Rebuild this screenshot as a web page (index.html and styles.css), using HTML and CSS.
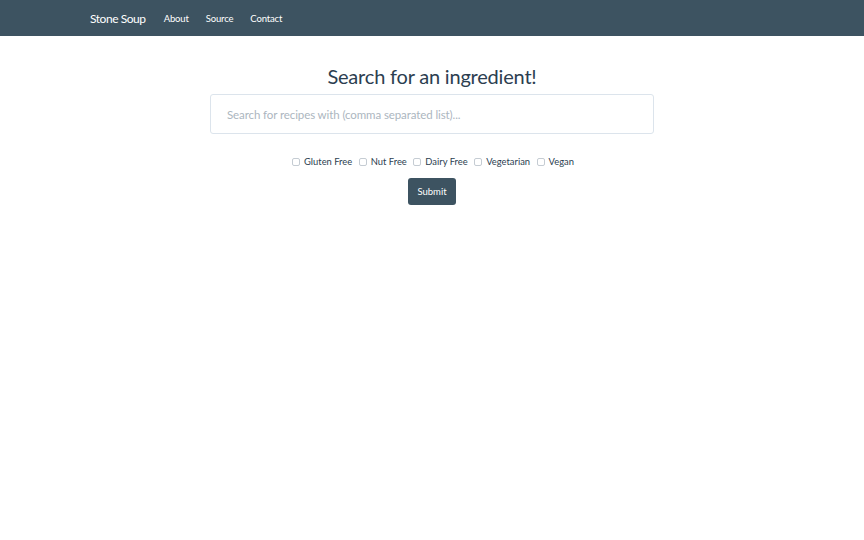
FILE: index.html
```html
<!DOCTYPE html>
<html>
<head>
<meta charset="utf-8">
<link rel="stylesheet" href="styles.css">
</head>
<body>
<nav class="navbar">
  <a class="brand">Stone Soup</a>
  <a class="nav-link">About</a>
  <a class="nav-link">Source</a>
  <a class="nav-link">Contact</a>
</nav>
<main class="main">
  <h1 class="title">Search for an ingredient!</h1>
  <div class="search-box"><input class="search" type="text" placeholder="Search for recipes with (comma separated list)..."></div>
  <div class="filters">
    <label class="filter"><span class="box"></span>Gluten Free</label>
    <label class="filter"><span class="box"></span>Nut Free</label>
    <label class="filter"><span class="box"></span>Dairy Free</label>
    <label class="filter"><span class="box"></span>Vegetarian</label>
    <label class="filter"><span class="box"></span>Vegan</label>
  </div>
  <button class="submit">Submit</button>
</main>
</body>
</html>
```
FILE: styles.css
```css
* { box-sizing: border-box; }
html, body { margin: 0; padding: 0; background: #fff; }
body { font-family: Lato, "Open Sans", sans-serif; color: #2c3e50; }
.navbar {
  height: 36px;
  background: #3d5361;
  display: flex;
  align-items: center;
  padding-left: 90px;
}
.brand { color: #fff; font-size: 12px; letter-spacing: -0.45px; margin-right: 18px; }
.nav-link { color: #fff; font-size: 9.5px; letter-spacing: -0.15px; margin-right: 17px; }
.main { display: flex; flex-direction: column; align-items: center; }
.title {
  font-weight: 400;
  font-size: 20px;
  letter-spacing: -0.2px;
  margin: 27px 0 0;
  line-height: 27px;
  color: #2c3e50;
}
.search-box { margin-top: 4px; }
.search {
  width: 444px;
  height: 40px;
  border: 1px solid #dce4ec;
  border-radius: 3px;
  padding: 0 16px;
  font-family: Lato, sans-serif;
  font-size: 11.5px;
  letter-spacing: -0.1px;
  color: #2c3e50;
  outline: none;
}
.search::placeholder { color: #acb6c0; }
.filters {
  display: flex;
  margin-top: 22px;
  gap: 6.5px;
  font-size: 9.4px;
  line-height: 12px;
  color: #2c3e50;
  margin-left: 2px;
}
.filter { display: flex; align-items: center; }
.box {
  width: 8px; height: 8px;
  border: 1px solid #c5ccd3;
  border-radius: 2px;
  margin-right: 4px;
  margin-top: -1px;
}
.submit {
  margin-top: 10px;
  width: 48px;
  height: 27px;
  background: #3d5361;
  color: #fff;
  border: none;
  border-radius: 3px;
  font-family: Lato, sans-serif;
  font-size: 9.5px;
  padding: 0;
}
```
